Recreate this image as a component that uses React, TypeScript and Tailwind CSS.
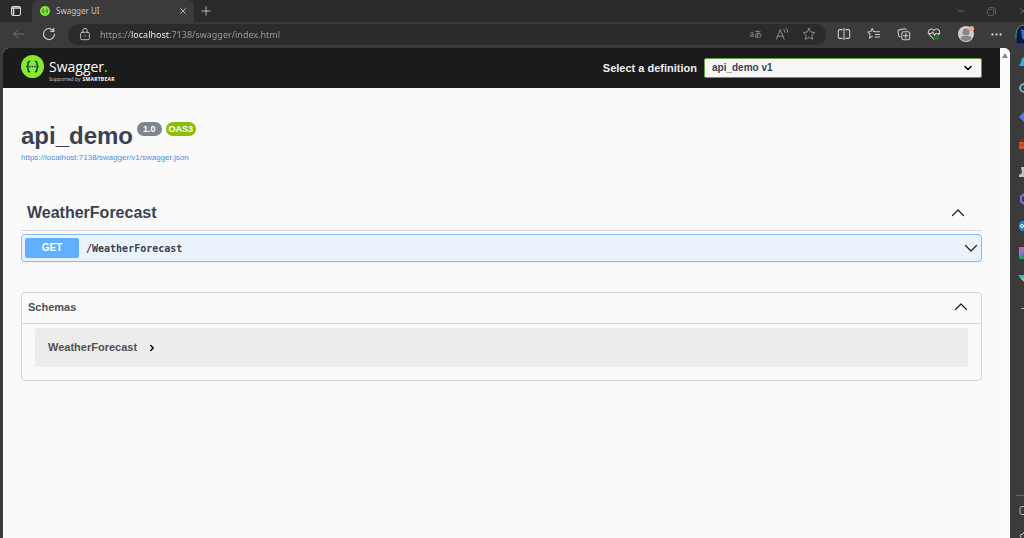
import type { ReactNode } from "react";
import { ChevronDown, ChevronRight, Minus, Plus, X } from "lucide-react";

interface IconProps {
  children: ReactNode;
  className?: string;
}

function Icon({ children, className = "size-4" }: IconProps) {
  return (
    <svg
      viewBox="0 0 16 16"
      fill="none"
      stroke="currentColor"
      strokeWidth="1"
      strokeLinecap="round"
      strokeLinejoin="round"
      className={`shrink-0 ${className}`}
      aria-hidden="true"
    >
      {children}
    </svg>
  );
}

function Arrow({ up = false }: { up?: boolean }) {
  return (
    <Icon className="size-4 text-[#1d1d1d]">
      <path d={up ? "M2.500 10.500 8 5l5.500 5.500" : "M2.500 5.500 8 11l5.500-5.500"} strokeWidth="1.200" />
    </Icon>
  );
}

function SwaggerMark({ className }: { className: string }) {
  return (
    <svg viewBox="0 0 24 24" className={className} aria-hidden="true">
      <circle cx="12" cy="12" r="12" fill="#85ea2d" />
      <g fill="none" stroke="#173647" strokeWidth="1.500">
        <path d="M9.500 6.500C7.700 6.500 7.400 7.200 7.400 8.400V10c0 1.300-.5 2-1.900 2 1.400 0 1.900.7 1.900 2v1.600c0 1.200.3 1.900 2.100 1.900" />
        <path d="M14.500 6.500c1.800 0 2.100.7 2.100 1.900V10c0 1.300.5 2 1.900 2-1.400 0-1.900.7-1.900 2v1.600c0 1.200-.3 1.900-2.100 1.900" />
      </g>
      <g fill="#173647">
        <circle cx="9.400" cy="12" r="0.900" />
        <circle cx="12" cy="12" r="0.900" />
        <circle cx="14.600" cy="12" r="0.900" />
      </g>
    </svg>
  );
}

function TitleBar() {
  return (
    <header className="flex h-[22px] items-stretch bg-[#2b2b2b] text-[#c8c8c8]">
      <button aria-label="Tab actions" className="flex w-8 items-center justify-center">
        <svg viewBox="0 0 12 12" className="size-3" aria-hidden="true">
          <rect x="1.500" y="1.500" width="9" height="9" rx="1.500" fill="none" stroke="#dcdcdc" />
          <path d="M1.500 3h9M3.500 3v7" stroke="#dcdcdc" strokeWidth="1.500" />
        </svg>
      </button>
      <div className="flex w-[162px] items-center rounded-t-md bg-[#3b3b3b] pr-[2px] pl-2">
        <SwaggerMark className="size-[10px]" />
        <span className="ml-[6px] flex-1 text-[8px]">Swagger UI</span>
        <button aria-label="Close tab" className="p-1">
          <X className="size-[10px]" strokeWidth={2} />
        </button>
      </div>
      <button aria-label="New tab" className="flex w-6 items-center justify-center">
        <Plus className="size-[14px]" strokeWidth={1.500} />
      </button>
      <div className="-mr-[14px] ml-auto flex items-center text-[#858585]">
        <button aria-label="Minimize" className="flex w-[31px] justify-center">
          <Minus className="size-[10px]" strokeWidth={1.500} />
        </button>
        <button aria-label="Restore" className="flex w-[31px] justify-center">
          <Icon className="size-[9px]">
            <rect x="1" y="4" width="11" height="11" rx="2" />
            <path d="M4 1h7q4 0 4 4v7" />
          </Icon>
        </button>
        <button aria-label="Close" className="flex w-[31px] justify-center">
          <X className="size-[10px]" strokeWidth={1.500} />
        </button>
      </div>
    </header>
  );
}

function AddressBar() {
  return (
    <div className="flex h-[21px] flex-1 items-center rounded-full bg-[#2b2b2b] px-[10px]">
      <Icon className="size-[14px] text-[#cccccc]">
        <rect x="3" y="6" width="10" height="8.500" rx="1.500" />
        <path d="M5.500 6V4a2.500 2.500 0 0 1 5 0v2M8 9.800v.6" />
      </Icon>
      {/* The gradient lights up the host part of the address */}
      <input
        type="text"
        aria-label="Address"
        defaultValue="https://localhost:7138/swagger/index.html"
        className="ml-2 h-4 min-w-0 flex-1 bg-[linear-gradient(90deg,#a0a0a0_31px,#ffffff_31px,#ffffff_70px,#a0a0a0_70px)] bg-clip-text text-[9px] text-transparent outline-none"
      />
      <div className="flex items-center gap-[13px] text-[#999999]">
        <button aria-label="Translate" className="font-['Noto_Sans','Noto_Sans_CJK_JP',sans-serif] text-[8px]">
          aあ
        </button>
        <button aria-label="Read aloud">
          <Icon className="size-[14px]">
            <path d="M1.500 14 6 3l4.500 11M3 10.500h6M10 2.500q1.500 1.500 1.500 3.500M12.500 1q2.500 2 2 5" />
          </Icon>
        </button>
        <button aria-label="Add to favorites">
          <Icon className="size-[14px]">
            <path d="m8 1.500 2 4.200 4.600.6-3.400 3.200.9 4.600L8 11.900l-4.100 2.200.9-4.600L1.400 6.300l4.600-.6z" />
          </Icon>
        </button>
      </div>
    </div>
  );
}

function Toolbar() {
  return (
    <nav className="flex h-[26px] items-center pb-[2px] text-[#cccccc]">
      <button aria-label="Back" className="ml-3 text-[#777777]">
        <Icon className="size-[14px]">
          <path d="M14 8H2M7 3 2 8l5 5" />
        </Icon>
      </button>
      <button aria-label="Refresh" className="mr-3 ml-4">
        <Icon className="size-[14px]">
          <path d="M13.500 5A6.300 6.300 0 1 0 14.300 8M13.500 1.500V5H10" strokeWidth="1.300" />
        </Icon>
      </button>
      <AddressBar />
      <div className="ml-[11px] flex items-center gap-4">
        <button aria-label="Split screen">
          <Icon className="size-[14px]">
            <path d="M6 3H3Q1.500 3 1.500 4.500v7Q1.500 13 3 13h3M10 3h3q1.500 0 1.500 1.500v7Q14.500 13 13 13h-3M8 1.500v13" strokeWidth="1.200" />
          </Icon>
        </button>
        <button aria-label="Favorites">
          <Icon className="size-[14px]">
            <path d="M10 5.500 7.500 5 6 1.800 4.400 5.200l-3.500.5 2.600 2.500-.7 4.300L6 10.700M9.500 5.500h5M9.500 8.500h5M9.500 11.500h5" strokeWidth="1.200" />
          </Icon>
        </button>
        <button aria-label="Collections">
          <Icon className="size-[14px]">
            <rect x="5.500" y="5.500" width="9" height="9" rx="2" strokeWidth="1.200" />
            <path d="M10 7.500v5M7.500 10h5M3.500 11Q2 11 1.700 9.500L1.200 5Q1 3.500 2.500 3.300L8.500 2Q10 1.700 10.500 3.300" strokeWidth="1.200" />
          </Icon>
        </button>
        <button aria-label="Browser essentials">
          <Icon className="size-[14px]">
            <path d="M8 14 2.500 8.500C-.5 5 4.500-.500 8 4c3.500-4.500 8.500 1 5.500 4.500L11 11M1.500 7.500H5l1.500-2 2 4 1.500-2h4.500" strokeWidth="1.200" />
            <circle cx="11.500" cy="12" r="3" fill="#157815" stroke="none" />
          </Icon>
        </button>
      </div>
      <button aria-label="Profile" className="ml-4">
        <svg viewBox="0 0 18 18" className="size-[18px]" aria-hidden="true">
          <circle cx="9" cy="9" r="8" fill="#cfcdca" />
          <circle cx="9" cy="7" r="3.500" fill="#898785" />
          <path d="M3.500 14q0-3 3-3h5q3 0 3 3-5.500 4-11 0z" fill="#898785" />
          <circle cx="14.500" cy="3.500" r="2.600" fill="#f5a19a" />
        </svg>
      </button>
      <button aria-label="Settings and more" className="ml-[15px]">
        <Icon className="size-[13px]">
          <g fill="currentColor" stroke="none">
            <circle cx="3" cy="8" r="1.400" />
            <circle cx="8" cy="8" r="1.400" />
            <circle cx="13" cy="8" r="1.400" />
          </g>
        </Icon>
      </button>
      <button aria-label="Discover" className="ml-3 shrink-0">
        <svg viewBox="0 0 9 21" className="h-[21px] w-[9px]" aria-hidden="true">
          <path d="M9 1Q1 2 1 10.500V20h8z" fill="#111b30" />
          <path d="M9 1Q1 2 1 10.500V14" fill="none" stroke="#27a5bd" />
          <path d="M1 14v6h8" fill="none" stroke="#2245cc" />
          <path d="m6 5 3 1v10l-2-2z" fill="#2b72ef" />
        </svg>
      </button>
    </nav>
  );
}

function PageHeader() {
  return (
    <div className="flex h-10 items-center justify-between bg-[#1b1b1b] pr-[18px] pl-[18px]">
      <a href="#" aria-label="Swagger, supported by SmartBear" className="flex items-start">
        <SwaggerMark className="size-[23px]" />
        <span className="ml-[5px] flex flex-col pt-[3px] font-['Open_Sans',sans-serif] text-white">
          <span className="text-[14px] leading-[18px]">
            Swagger<span className="text-[#85ea2d]">.</span>
          </span>
          <span className="flex items-center text-[5px] leading-[6px] text-[#cccccc]">
            Supported by<b className="ml-[2px] tracking-wider text-white">SMARTBEAR</b>
          </span>
        </span>
      </a>
      <div className="flex items-center">
        <label htmlFor="definition" className="mr-[7px] text-[11px] font-bold text-[#f0f0f0]">
          Select a definition
        </label>
        <div className="relative flex">
          <select
            id="definition"
            className="h-5 w-[278px] appearance-none rounded-xs border border-[#62a03f] bg-[#f7f7f7] px-[7px] text-[10px] leading-4 font-bold text-[#3b4151]"
          >
            <option>api_demo v1</option>
          </select>
          <ChevronDown className="pointer-events-none absolute top-1 right-2 size-3 text-black" strokeWidth={3} />
        </div>
      </div>
    </div>
  );
}

function ApiInfo() {
  return (
    <section className="pt-8">
      <div className="flex items-start gap-1">
        <h1 className="text-[24px] leading-[32px] font-bold">api_demo</h1>
        <span className="mt-[2px] rounded-full bg-[#7d8492] px-[6px] text-[9px] leading-[14px] font-bold text-white">
          1.0
        </span>
        <span className="mt-[2px] rounded-full bg-[#89bf04] px-[3px] text-[9px] leading-[14px] font-bold text-white">
          OAS3
        </span>
      </div>
      <a href="#" className="block text-[8px] leading-[12px] text-[#4990e2]">
        https://localhost:7138/swagger/v1/swagger.json
      </a>
    </section>
  );
}

function Operations() {
  return (
    <section className="mt-8">
      <button className="flex h-[35px] w-full items-center justify-between border-b border-[#d8d9db] pr-4 pl-[6px]">
        <h2 className="text-[16px] font-bold">WeatherForecast</h2>
        <Arrow up />
      </button>
      <button className="mt-[3px] flex h-7 w-full items-center rounded-sm border border-[#85bdf6] bg-[#eaf3fc] pr-[2px] pl-[3px] shadow-xs">
        <span className="w-[54px] rounded-xs bg-[#61affe] text-center text-[10px] leading-[20px] font-bold text-white">
          GET
        </span>
        <span className="ml-[7px] flex-1 text-left font-['DejaVu_Sans_Mono',monospace] text-[10px] font-bold">
          /WeatherForecast
        </span>
        <Arrow />
      </button>
    </section>
  );
}

function Schemas() {
  return (
    <section className="mt-[30px] rounded-sm border border-[#d5d6d8] pb-[13px] text-[#505050]">
      <button className="flex h-[31px] w-full items-center justify-between border-b border-[#d5d6d8] pr-3 pb-[2px] pl-[6px]">
        <h3 className="text-[11px] font-bold">Schemas</h3>
        <Arrow up />
      </button>
      <div className="mx-[13px] mt-1 flex h-[39px] items-center rounded-xs bg-[#ececec] px-[13px]">
        <button className="flex items-center gap-[10px] text-[11px] font-bold">
          WeatherForecast
          <ChevronRight className="size-[10px] text-black" strokeWidth={3.500} />
        </button>
      </div>
    </section>
  );
}

function Sidebar() {
  return (
    <aside className="flex w-[14px] shrink-0 flex-col overflow-hidden bg-[#3b3b3b]">
      <svg viewBox="0 0 14 275" className="h-[275px] w-[14px]" aria-hidden="true">
        <path d="M14 9q-3 1-3 5l-2 4h5z" fill="#28afea" />
        <circle cx="14" cy="40" r="4" fill="#1b566e" stroke="#b5bdc0" strokeWidth="1.500" />
        <path d="m9 69 5-5v10z" fill="#5379ee" />
        <path d="M9 94h5v7H9z" fill="#d85028" />
        <path d="M11 94v-2h3M9 97h5" fill="none" stroke="#9c3519" />
        <path d="M11 119h3v10H9v-2l3-2z" fill="#c0c0c0" />
        <path d="m14 145-4 3v6l4 3v-3l-2-1v-4l2-1z" fill="#8170df" />
        <path d="M11 173h3v10h-3l-2-3v-4z" fill="#138bd7" />
        <circle cx="12" cy="178" r="1.500" fill="none" stroke="#fff" />
        <path d="M9 199h5v6l-5 4z" fill="#b865dc" />
        <path d="m9 209 5-6v8H9z" fill="#1aa66a" />
        <path d="M8 227h6v4h-3z" fill="#36b4e8" />
        <path d="m11 231 3-1v4z" fill="#eeb629" />
        <path d="M11 260.500h3" stroke="#b5b5b5" />
      </svg>
      <svg viewBox="0 0 14 43" className="mt-auto h-[43px] w-[14px]" aria-hidden="true">
        <path d="M6 .5h8" stroke="#666666" />
        <path d="M14 11.500h-2q-2 0-2 2v4q0 2 2 2h2" fill="none" stroke="#bcbcbc" />
        <path d="m14 37-1 2-3 1 1 3" fill="none" stroke="#bcbcbc" />
      </svg>
    </aside>
  );
}

export default function App() {
  return (
    <div className="flex h-screen flex-col overflow-hidden bg-[#3b3b3b] font-['Noto_Sans',sans-serif]">
      <TitleBar />
      <Toolbar />
      <div className="flex min-h-0 flex-1 pl-[3px]">
        <main className="flex min-w-0 flex-1 overflow-hidden rounded-t-md bg-[#fafafa] font-['Liberation_Sans',sans-serif] text-[#3b4151]">
          <div className="min-w-0 flex-1">
            <PageHeader />
            <div className="px-[18px]">
              <ApiInfo />
              <Operations />
              <Schemas />
            </div>
          </div>
          <div className="flex w-[10px] shrink-0 justify-center bg-[#fcfcfc] pt-[5px]">
            <svg viewBox="0 0 6 5" className="h-[5px] w-[6px]" aria-hidden="true">
              <path d="m3 0 3 5H0z" fill="#888888" />
            </svg>
          </div>
        </main>
        <Sidebar />
      </div>
    </div>
  );
}
